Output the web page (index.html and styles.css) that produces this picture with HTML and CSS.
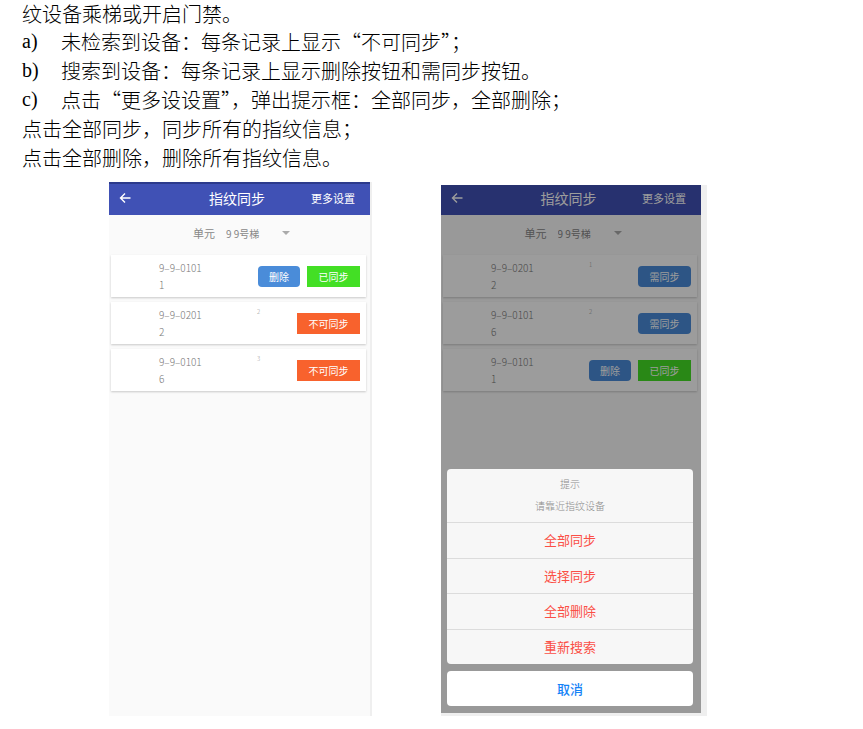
FILE: index.html
```html
<!DOCTYPE html>
<html lang="zh-CN">
<head>
  <meta charset="UTF-8">
  <meta name="viewport" content="width=device-width, initial-scale=1.0">
  <title>指纹同步</title>
  <link rel="stylesheet" href="styles.css">
</head>
<body>

  <div class="doc">
    <p class="first">纹设备乘梯或开启门禁。</p>
    <p class="item"><span class="mark">a)</span>未检索到设备：每条记录上显示“不可同步”；</p>
    <p class="item"><span class="mark">b)</span>搜索到设备：每条记录上显示删除按钮和需同步按钮。</p>
    <p class="item"><span class="mark">c)</span>点击“更多设设置”，弹出提示框：全部同步，全部删除；</p>
    <p>点击全部同步，同步所有的指纹信息；</p>
    <p>点击全部删除，删除所有指纹信息。</p>
  </div>

  <div class="screens">
    <!-- No device found -->
    <section class="screen screen-list">
      <header class="topbar">
        <button class="back" aria-label="返回">
          <svg width="12" height="12" viewBox="0 0 12 12"><path d="M11.5 6H1.5M6 1.5L1.5 6L6 10.5" fill="none" stroke="#fff" stroke-width="1.4"/></svg>
        </button>
        <h2>指纹同步</h2>
        <button class="more">更多设置</button>
      </header>
      <div class="unit">
        <label for="unit1">单元</label>
        <select id="unit1"><option>9 9号梯</option></select>
        <svg width="8" height="4" viewBox="0 0 8 4"><path d="M0 0H8L4 4Z" fill="#aaa"/></svg>
      </div>
      <ul class="records">
        <li class="record">
          <div class="info"><span>9–9–0101</span><span>1</span></div>
          <div class="actions">
            <button class="btn btn-blue">删除</button>
            <button class="btn btn-green">已同步</button>
          </div>
        </li>
        <li class="record">
          <div class="info"><span>9–9–0201</span><span>2</span></div>
          <span class="num">2</span>
          <div class="actions"><button class="btn btn-orange">不可同步</button></div>
        </li>
        <li class="record">
          <div class="info"><span>9–9–0101</span><span>6</span></div>
          <span class="num">3</span>
          <div class="actions"><button class="btn btn-orange">不可同步</button></div>
        </li>
      </ul>
    </section>

    <!-- Action sheet open -->
    <section class="screen screen-sheet">
      <header class="topbar">
        <button class="back" aria-label="返回">
          <svg width="12" height="12" viewBox="0 0 12 12"><path d="M11.5 6H1.5M6 1.5L1.5 6L6 10.5" fill="none" stroke="#fff" stroke-width="1.4"/></svg>
        </button>
        <h2>指纹同步</h2>
        <button class="more">更多设置</button>
      </header>
      <div class="unit">
        <label for="unit2">单元</label>
        <select id="unit2"><option>9 9号梯</option></select>
        <svg width="8" height="4" viewBox="0 0 8 4"><path d="M0 0H8L4 4Z" fill="#aaa"/></svg>
      </div>
      <ul class="records">
        <li class="record">
          <div class="info"><span>9–9–0201</span><span>2</span></div>
          <span class="num">1</span>
          <div class="actions"><button class="btn btn-blue btn-wide">需同步</button></div>
        </li>
        <li class="record">
          <div class="info"><span>9–9–0101</span><span>6</span></div>
          <span class="num">2</span>
          <div class="actions"><button class="btn btn-blue btn-wide">需同步</button></div>
        </li>
        <li class="record">
          <div class="info"><span>9–9–0101</span><span>1</span></div>
          <div class="actions">
            <button class="btn btn-blue">删除</button>
            <button class="btn btn-green">已同步</button>
          </div>
        </li>
      </ul>

      <div class="overlay">
        <div class="sheet">
          <div class="sheet-head">
            <span>提示</span>
            <span>请靠近指纹设备</span>
          </div>
          <div class="sheet-options">
            <button>全部同步</button>
            <button>选择同步</button>
            <button>全部删除</button>
            <button>重新搜索</button>
          </div>
        </div>
        <button class="cancel">取消</button>
      </div>
    </section>
  </div>

</body>
</html>
```

FILE: styles.css
```css
* { box-sizing: border-box; }
body { margin: 0; background: #fff; font-family: "Noto Sans CJK SC", sans-serif; }
button { padding: 0; border: none; background: none; font-family: inherit; cursor: pointer; }

.doc { margin-bottom: 10px; padding-left: 22px; font-size: 20px; font-weight: 300; line-height: 29px; color: #000; }
.doc p { margin: 0; white-space: nowrap; }
.doc .first { line-height: 27px; }
.item { display: flex; height: 29px; }
.mark { width: 39px; font-family: "Liberation Serif", serif; font-weight: 400; }

.screens { display: grid; grid-template-columns: 263fr 266fr; gap: 69px; align-items: end; padding: 0 156px 0 109px; }
.screen { position: relative; background: #fafafa; font-weight: 300; }
.screen-list { min-height: 534px; border-right: 2px solid #efefef; }
.screen-sheet { min-height: 531px; border-right: 6px solid #efefef; border-bottom: 3px solid #efefef; }

.topbar { display: grid; grid-template-columns: 1fr auto 1fr; align-items: center; height: 30px; padding: 0 15px 4px 10px; background: #4051b5; color: #fff; }
.screen-list .topbar { height: 33px; border-top: 2px solid #2c3a8c; }
.topbar h2 { margin: 0; font-size: 14px; font-weight: 400; line-height: 20px; }
.back { justify-self: start; display: flex; }
.more { justify-self: end; color: #fff; font-size: 11px; line-height: 20px; }

.unit { display: flex; justify-content: center; align-items: center; height: 40px; padding: 0 0 4px 4px; color: #888; }
.unit label { margin-right: 11px; font-size: 11px; font-weight: 400; }
.unit select { width: 56px; padding: 0; border: none; background: none; appearance: none; color: #888; font-family: inherit; font-size: 10px; font-weight: 400; }

.records { display: grid; gap: 5px; margin: 0; padding: 0 4px 0 2px; list-style: none; }
.record { display: grid; grid-template-columns: 98px 1fr; align-items: center; height: 42px; padding: 0 6px 0 48px; background: #fff; box-shadow: 0 1px 2px rgba(0, 0, 0, 0.2); }
.info { display: grid; grid-area: 1 / 1; font-size: 10px; line-height: 17px; color: #777; }
.num { grid-area: 1 / 2; align-self: start; padding-top: 6px; font-size: 6px; line-height: 8px; color: #999; }
.actions { display: flex; grid-area: 1 / 1 / 2 / 3; justify-self: end; gap: 7px; }
.btn { width: 53px; height: 21px; color: #fff; font-size: 10px; line-height: 21px; }
.btn-blue { width: 42px; border-radius: 4px; background: #4a8cd9; }
.btn-wide { width: 53px; }
.btn-green { background: #43df25; }
.btn-orange { width: 63px; background: #f8622d; }

.overlay { position: absolute; inset: 0; display: flex; flex-direction: column; justify-content: flex-end; gap: 7px; padding: 7px 8px 7px 6px; background: rgba(0, 0, 0, 0.39); }
.sheet { border-radius: 4px; background: #f7f7f7; overflow: hidden; }
.sheet-head { display: grid; align-content: center; height: 53px; padding-bottom: 1px; text-align: center; font-size: 10px; line-height: 22px; color: #8c8c8c; }
.sheet-options { display: grid; grid-auto-rows: 1fr; height: 142px; }
.sheet-options button { border-top: 1px solid #dcdcdc; color: #fb4f46; font-size: 13px; line-height: 20px; }
.cancel { height: 35px; border-radius: 4px; background: #fff; color: #1583f7; font-size: 13px; font-weight: 500; line-height: 20px; }
```
